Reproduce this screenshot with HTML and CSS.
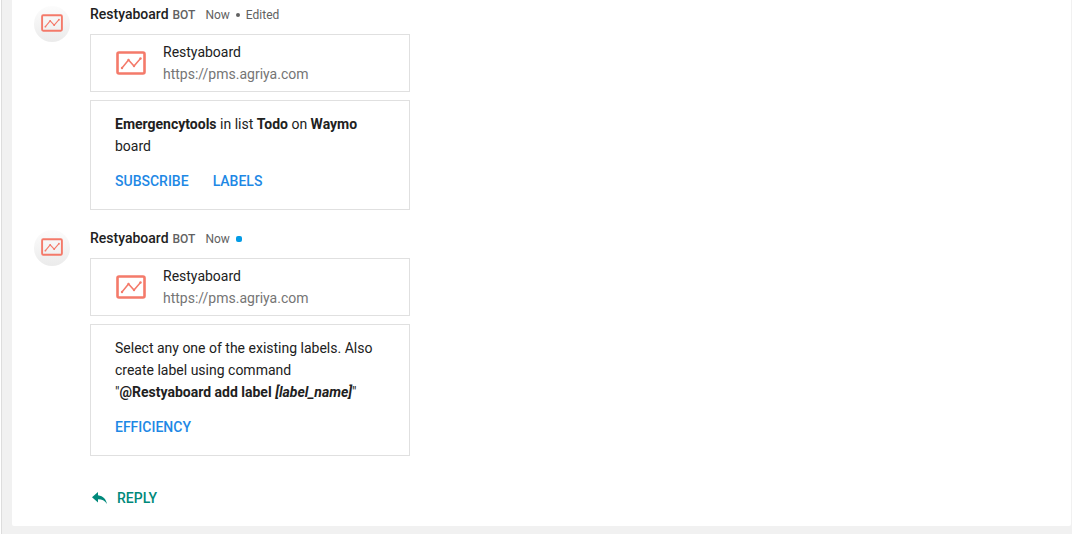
FILE: index.html
```html
<!DOCTYPE html>
<html lang="en">
<head>
<meta charset="utf-8">
<title>Restyaboard</title>
<link rel="stylesheet" href="styles.css">
</head>
<body>
<svg class="defs" aria-hidden="true">
  <symbol id="chart" viewBox="0 0 30 24">
    <rect x="1.5" y="1.5" width="27" height="21" rx="1.5" fill="none" stroke="#f47a6a" stroke-width="2.6"/>
    <path d="M6 17L12.5 9L18 15L24.5 7.500" fill="none" stroke="#f47a6a" stroke-width="1.5"/>
    <g fill="#f47a6a"><circle cx="6" cy="17" r="1.200"/><circle cx="12.500" cy="9" r="1.200"/><circle cx="18" cy="15" r="1.200"/><circle cx="24.500" cy="7.500" r="1.200"/></g>
  </symbol>
</svg>
<div class="page">
  <main class="thread">
    <article class="message">
      <div class="avatar"><svg class="avatar-icon"><use href="#chart"/></svg></div>
      <div class="content">
        <header class="meta"><span class="name">Restyaboard</span><span class="bot">BOT</span><span class="time">Now</span><span class="dot"></span><span class="edited">Edited</span></header>
        <section class="card link-card">
          <svg class="card-icon"><use href="#chart"/></svg>
          <div><div>Restyaboard</div><div class="url">https://pms.agriya.com</div></div>
        </section>
        <section class="card body-card">
          <p class="text"><b>Emergencytools</b> in list <b>Todo</b> on <b>Waymo</b> board</p>
          <div class="actions"><button class="action">SUBSCRIBE</button><button class="action">LABELS</button></div>
        </section>
      </div>
    </article>
    <article class="message">
      <div class="avatar"><svg class="avatar-icon"><use href="#chart"/></svg></div>
      <div class="content">
        <header class="meta"><span class="name">Restyaboard</span><span class="bot">BOT</span><span class="time">Now</span><span class="dot unread"></span></header>
        <section class="card link-card">
          <svg class="card-icon"><use href="#chart"/></svg>
          <div><div>Restyaboard</div><div class="url">https://pms.agriya.com</div></div>
        </section>
        <section class="card body-card">
          <p class="text">Select any one of the existing labels. Also create label using command "<b>@Restyaboard add label <i>[label_name]</i></b>"</p>
          <div class="actions"><button class="action">EFFICIENCY</button></div>
        </section>
      </div>
    </article>
    <button class="reply">
      <svg class="reply-icon" viewBox="0 0 15 12"><path d="M6 3.200V0L0 5.300L6 10.600V7.300C10 7.300 12.800 8.600 15 12C14.200 7.500 11.500 4 6 3.200Z" fill="#00897b"/></svg>REPLY
    </button>
  </main>
</div>
</body>
</html>
```
FILE: styles.css
```css
* {
  box-sizing: border-box;
}

body {
  margin: 0;
  font: 14px/22px Roboto, sans-serif;
  color: #212121;
  background: #fff;
}

.defs {
  display: none;
}

.page {
  min-height: 100vh;
  margin-left: 1px;
  padding: 0 1px 8px 10px;
  border-left: 1px solid #ddd;
  background: #f1f1f1;
}

.thread {
  display: flex;
  flex-direction: column;
  align-items: flex-start;
  gap: 18px;
  padding: 4px 22px 18px;
  background: #fff;
  border-radius: 0 0 2px 2px;
}

.message {
  display: flex;
  gap: 20px;
  width: 100%;
}

.avatar {
  display: flex;
  flex: none;
  justify-content: center;
  width: 36px;
  height: 36px;
  margin-top: 2px;
  padding-top: 8px;
  border-radius: 50%;
  background: linear-gradient(#fcfcfc, #ebebeb);
}

.avatar-icon {
  width: 22px;
  height: 18px;
}

.content {
  flex: 1;
  max-width: 320px;
}

.meta {
  display: flex;
  align-items: baseline;
  height: 20px;
  margin-bottom: 10px;
  font-size: 12px;
  line-height: 20px;
  color: #616161;
}

.name {
  font-size: 14px;
  font-weight: 500;
  color: #212121;
}

.bot {
  margin-left: 4px;
  font-weight: 500;
}

.time {
  margin-left: 10px;
}

.dot {
  align-self: center;
  width: 4px;
  height: 4px;
  margin: 2px 6px 0;
  border-radius: 50%;
  background: #616161;
}

.unread {
  width: 6px;
  height: 6px;
  border-radius: 2px;
  background: #039be5;
}

.card {
  padding: 12px 24px 18px;
  border: 1px solid #e0e0e0;
}

.link-card {
  display: flex;
  align-items: center;
  gap: 17px;
  margin-bottom: 8px;
  padding: 6px 25px;
}

.card-icon {
  width: 30px;
  height: 24px;
}

.url {
  color: #757575;
}

.text {
  margin: 0;
}

.text b {
  font-weight: 700;
}

.actions {
  display: flex;
  gap: 24px;
  margin-top: 14px;
}

button {
  padding: 0;
  border: 0;
  background: none;
  font: 500 14px/20px Roboto, sans-serif;
  cursor: pointer;
}

.action {
  color: #1e88e5;
}

.reply {
  display: flex;
  align-items: center;
  gap: 10px;
  margin: 14px 0 0 58px;
  color: #00897b;
}

.reply-icon {
  width: 15px;
  height: 12px;
}
```
